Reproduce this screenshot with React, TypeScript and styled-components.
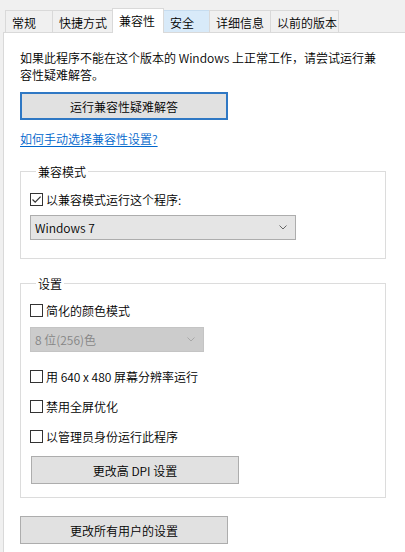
import React from "react";
import styled, { createGlobalStyle } from "styled-components";

const GlobalStyle = createGlobalStyle`
  html, body {
    margin: 0;
    padding: 0;
    background: #f0f0f0;
  }
  body {
    font-family: "Noto Sans CJK SC", "Noto Sans", sans-serif;
    font-size: 12px;
    font-weight: 350;
    color: #000;
  }
`;

const Window = styled.div`
  width: 405px;
  height: 552px;
  overflow: hidden;
  display: flex;
  flex-direction: column;
  background: #f0f0f0;
`;

const TabStrip = styled.div`
  display: flex;
  align-items: flex-end;
  height: 32px;
  padding-left: 5px;
  box-sizing: border-box;
`;

const Tab = styled.div<{ $w: number; $active?: boolean; $hover?: boolean }>`
  width: ${(p) => p.$w}px;
  height: ${(p) => (p.$active ? 25 : 22)}px;
  margin-bottom: ${(p) => (p.$active ? -1 : 0)}px;
  margin-left: -1px;
  padding-left: 6px;
  padding-top: 1px;
  padding-bottom: ${(p) => (p.$active ? 3 : 0)}px;
  box-sizing: border-box;
  display: flex;
  align-items: center;
  line-height: 17px;
  white-space: nowrap;
  border: 1px solid ${(p) => (p.$hover ? "#c6dcef" : "#d9d9d9")};
  border-bottom: none;
  background: ${(p) => (p.$active ? "#fff" : p.$hover ? "#d8eaf9" : "#f0f0f0")};
  position: ${(p) => (p.$active ? "relative" : "static")};
  z-index: ${(p) => (p.$active ? 1 : 0)};

  &:first-child {
    margin-left: 0;
  }
`;

const Pane = styled.div`
  flex: 1;
  margin-left: 3px;
  background: #fff;
  border-top: 1px solid #d9d9d9;
  border-left: 1px solid #d9d9d9;
  padding: 16px 0 0 16px;
  display: flex;
  flex-direction: column;
  align-items: flex-start;
`;

const Intro = styled.p`
  margin: 0;
  line-height: 17px;
  white-space: nowrap;
`;

const Button = styled.button<{ $default?: boolean; $mt: number; $ml?: number }>`
  width: 208px;
  height: 28px;
  margin: ${(p) => p.$mt}px 0 0 ${(p) => p.$ml ?? 0}px;
  padding: 0;
  box-sizing: border-box;
  font: inherit;
  color: #000;
  background: #e1e1e1;
  border: ${(p) => (p.$default ? "2px solid #2f78c4" : "1px solid #adadad")};
  display: flex;
  align-items: center;
  justify-content: center;
  line-height: 17px;
`;

const HelpLink = styled.a`
  margin-top: 10px;
  line-height: 17px;
  color: #0066cc;
  text-decoration: underline;
  text-underline-offset: 2px;
  cursor: pointer;
`;

const Group = styled.fieldset<{ $mt: number; $pt: number; $pb: number }>`
  width: 366px;
  box-sizing: border-box;
  margin: ${(p) => p.$mt}px 0 0 0;
  padding: ${(p) => p.$pt}px 9px ${(p) => p.$pb}px 9px;
  border: 1px solid #dcdcdc;
  display: flex;
  flex-direction: column;
  align-items: flex-start;
  min-width: 0;
`;

const Legend = styled.legend`
  margin-left: 6px;
  padding: 0 2px;
  line-height: 17px;
`;

const CheckRow = styled.label<{ $mt?: number }>`
  display: flex;
  align-items: center;
  height: 17px;
  gap: 3px;
  margin-top: ${(p) => p.$mt ?? 0}px;
  white-space: nowrap;
`;

const Box = styled.span`
  width: 13px;
  height: 13px;
  box-sizing: border-box;
  border: 1px solid #333;
  background: #fff;
  display: flex;
  align-items: center;
  justify-content: center;
`;

const Select = styled.div<{ $w: number; $mt: number; $disabled?: boolean }>`
  width: ${(p) => p.$w}px;
  height: 25px;
  margin-top: ${(p) => p.$mt}px;
  box-sizing: border-box;
  padding: 0 8px 0 4px;
  display: flex;
  align-items: center;
  justify-content: space-between;
  line-height: 17px;
  background: ${(p) => (p.$disabled ? "#cccccc" : "#e5e5e5")};
  border: 1px solid ${(p) => (p.$disabled ? "#c4c4c4" : "#adadad")};
  color: ${(p) => (p.$disabled ? "#858585" : "#000")};
`;

const Chevron = ({ color }: { color: string }) => (
  <svg width="8" height="5" viewBox="0 0 8 5">
    <path d="M0.5 0.5 L4 4 L7.5 0.5" fill="none" stroke={color} strokeWidth="1" />
  </svg>
);

const CheckBox = ({ checked }: { checked?: boolean }) => (
  <Box>
    {checked && (
      <svg width="11" height="11" viewBox="0 0 11 11">
        <path d="M1.5 5.5 L4.2 8.2 L9.6 2.6" fill="none" stroke="#333" strokeWidth="1.2" />
      </svg>
    )}
  </Box>
);

const tabs = [
  { label: "常规", w: 48 },
  { label: "快捷方式", w: 61 },
  { label: "兼容性", w: 52, active: true },
  { label: "安全", w: 47, hover: true },
  { label: "详细信息", w: 62 },
  { label: "以前的版本", w: 69 },
];

export default function App() {
  return (
    <>
      <GlobalStyle />
      <Window>
        <TabStrip>
          {tabs.map((t) => (
            <Tab key={t.label} $w={t.w} $active={t.active} $hover={t.hover}>
              {t.label}
            </Tab>
          ))}
        </TabStrip>
        <Pane>
          <Intro>
            如果此程序不能在这个版本的 Windows 上正常工作，请尝试运行兼
            <br />
            容性疑难解答。
          </Intro>
          <Button $default $mt={9}>运行兼容性疑难解答</Button>
          <HelpLink>如何手动选择兼容性设置?</HelpLink>

          <Group $mt={16} $pt={11} $pb={18}>
            <Legend>兼容模式</Legend>
            <CheckRow>
              <CheckBox checked />
              以兼容模式运行这个程序:
            </CheckRow>
            <Select $w={266} $mt={7}>
              <span>Windows 7</span>
              <Chevron color="#666" />
            </Select>
          </Group>

          <Group $mt={16} $pt={10} $pb={13}>
            <Legend>设置</Legend>
            <CheckRow>
              <CheckBox />
              简化的颜色模式
            </CheckRow>
            <Select $w={174} $mt={8} $disabled>
              <span>8 位(256)色</span>
              <Chevron color="#a8a8a8" />
            </Select>
            <CheckRow $mt={16}>
              <CheckBox />
              用 640 x 480 屏幕分辨率运行
            </CheckRow>
            <CheckRow $mt={13}>
              <CheckBox />
              禁用全屏优化
            </CheckRow>
            <CheckRow $mt={13}>
              <CheckBox />
              以管理员身份运行此程序
            </CheckRow>
            <Button $mt={11} $ml={1}>更改高 DPI 设置</Button>
          </Group>

          <Button $mt={18}>更改所有用户的设置</Button>
        </Pane>
      </Window>
    </>
  );
}
